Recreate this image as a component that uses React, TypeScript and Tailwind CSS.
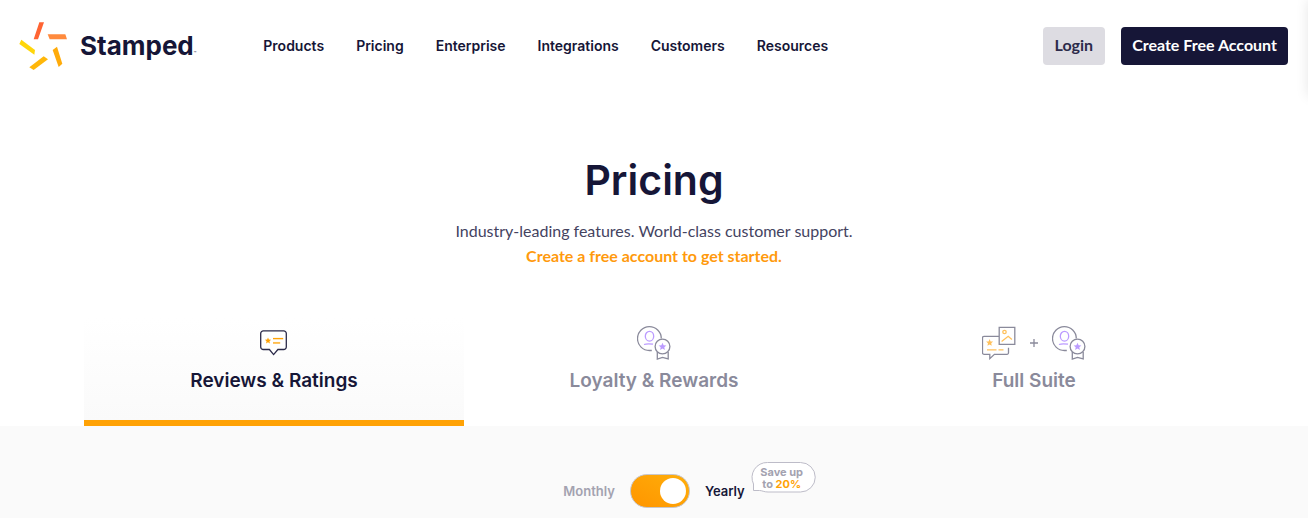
import { useState } from 'react';

const NAV_LINKS = ['Products', 'Pricing', 'Enterprise', 'Integrations', 'Customers', 'Resources'];

type TabId = 'reviews' | 'loyalty' | 'suite';

const STAR_POINTS = '0,-4 1.1,-1.4 3.9,-1.2 1.8,0.6 2.4,3.4 0,1.9 -2.4,3.4 -1.8,0.6 -3.9,-1.2 -1.1,-1.4';

function LogoMark() {
  return (
    <svg className="h-[50px] w-[50px]" viewBox="54 62 150 150" aria-hidden="true">
      <polygon points="118,66 132,66 114,117 101,117" fill="#ff6433" />
      <polygon points="143,102 196,102 201,117 149,117" fill="#ff8a3d" />
      <polygon points="64,118 105,149 103,163 58,131" fill="#ffd60a" />
      <polygon points="131,168 144,177 101,209 88,201" fill="#ffb70a" />
      <polygon points="158,149 171,139 187,190 176,200" fill="#ffab0a" />
    </svg>
  );
}

function ReviewsIcon() {
  return (
    <svg className="h-[34px] w-[34px]" viewBox="0 0 34 34" fill="none" aria-hidden="true">
      <path
        d="M6.3 4.9h20.4a2.6 2.6 0 0 1 2.6 2.6v13.4a2.6 2.6 0 0 1-2.6 2.6h-5.8l-4.3 5.1-4.2-5.1H6.3a2.6 2.6 0 0 1-2.6-2.6V7.5a2.6 2.6 0 0 1 2.6-2.6Z"
        fill="#fff"
        stroke="#2b2a49"
        strokeWidth="1.3"
      />
      <polygon points={STAR_POINTS} transform="translate(11 14.7) scale(.8)" fill="#ffa205" />
      <path d="M16 12.6h10.2" stroke="#ffa205" strokeWidth="1.4" />
      <path d="M16 16.9h7.2" stroke="#ffbd4d" strokeWidth="1.9" />
    </svg>
  );
}

function LoyaltyIcon() {
  return (
    <svg className="h-[34px] w-[34px]" viewBox="0 0 34 34" fill="none" strokeWidth="1.3" aria-hidden="true">
      <path d="M14.8 24.5H12.5A11.9 11.9 0 1 1 24.3 12.4" stroke="#8a8a9b" />
      <ellipse cx="12.5" cy="10.2" rx="4.2" ry="4.9" stroke="#bb9bff" />
      <path d="M7 18.5c2-.8 6-.8 9-.3" stroke="#bb9bff" />
      <circle cx="25.5" cy="20.5" r="7.4" stroke="#8a8a9b" />
      <polygon points={STAR_POINTS} transform="translate(25.5 20.7)" fill="#bb9bff" />
      <path d="M20.3 26v7l5.2-1.6 5.7 1.6v-7" stroke="#8a8a9b" />
    </svg>
  );
}

function ReviewPhotoIcon() {
  return (
    <svg className="h-[34px] w-[34px]" viewBox="0 0 34 34" fill="none" strokeWidth="1.3" aria-hidden="true">
      <path
        d="M17 10.3H2a1.5 1.5 0 0 0-1.500 1.5v15a1.5 1.5 0 0 0 1.5 1.5h5.8v4.3l4.6-4.3h12.6a1.5 1.5 0 0 0 1.5-1.5v-5"
        stroke="#8a8a9b"
      />
      <path d="M17.2 1.3h15.6v17H17.2z" stroke="#8a8a9b" />
      <circle cx="22.5" cy="6" r="1.7" stroke="#ffc15c" />
      <path d="m19.6 15.5 6.6-5.2 3.7 3.2" stroke="#ffc15c" />
      <polygon points={STAR_POINTS} transform="translate(7.6 16.7) scale(.9)" fill="#ffc15c" />
      <path d="M5 23.8h9.5M16.5 23.8h5" stroke="#ffc15c" />
    </svg>
  );
}

function SuiteIcon() {
  return (
    <span className="flex items-center gap-3">
      <ReviewPhotoIcon />
      <svg className="h-3 w-3" viewBox="0 0 12 12" stroke="#8a8a9b" strokeWidth="1.3" aria-hidden="true">
        <path d="M6 2v8M2 6h8" />
      </svg>
      <LoyaltyIcon />
    </span>
  );
}

const TABS: { id: TabId; label: string; Icon: () => React.JSX.Element }[] = [
  { id: 'reviews', label: 'Reviews & Ratings', Icon: ReviewsIcon },
  { id: 'loyalty', label: 'Loyalty & Rewards', Icon: LoyaltyIcon },
  { id: 'suite', label: 'Full Suite', Icon: SuiteIcon },
];

function Header() {
  return (
    <header className="flex h-[92px] items-center pr-5 pl-[18px]">
      <a href="#" className="flex items-center gap-3" aria-label="Stamped">
        <LogoMark />
        <span className="flex items-baseline text-[26px] leading-[34px] font-bold">
          Stamped<span className="text-[4px] leading-none">™</span>
        </span>
      </a>
      <nav className="ml-[67px] flex gap-8 text-sm font-semibold">
        {NAV_LINKS.map((label) => (
          <a key={label} href="#" className="whitespace-nowrap">
            {label}
          </a>
        ))}
      </nav>
      <div className="ml-auto flex gap-4 font-['Lato',sans-serif] text-base font-bold">
        <button type="button" className="h-[38px] rounded bg-[#dddce2] px-3 pb-0.5 text-[#2c2b4b]">
          Login
        </button>
        <button type="button" className="h-[38px] rounded bg-[#161637] px-[11px] pb-0.5 whitespace-nowrap text-white">
          Create Free Account
        </button>
      </div>
    </header>
  );
}

function SaveBubble() {
  return (
    <span className="absolute bottom-full left-full ml-1.5 -mb-3 flex h-[31px] w-[66px] flex-col items-center justify-center pr-1 text-[11px] leading-3 font-bold text-[#a3a2b0]">
      <svg className="absolute inset-0 h-full w-full" viewBox="0 0 66 31" fill="none" aria-hidden="true">
        <path
          d="M16.5.5h33a14.75 14.75 0 0 1 0 29.5H17c-4 0-6-1.5-8.5-1.5L2.5 28.5v-6.5A15 15 0 0 1 16.5.5Z"
          fill="#fff"
          stroke="#bdbcc8"
        />
      </svg>
      <span className="relative">Save up</span>
      <span className="relative">
        to <span className="text-[#ffa205]">20%</span>
      </span>
    </span>
  );
}

export default function App() {
  const [activeTab, setActiveTab] = useState<TabId>('reviews');
  const [yearly, setYearly] = useState(true);

  return (
    <div className="relative flex min-h-screen flex-col overflow-hidden bg-white font-['Inter',sans-serif] text-[#161637]">
      <Header />

      <div className="absolute top-0 left-full h-24 w-64 bg-white shadow-[0_0_12px_rgba(0,0,0,0.1)]" />

      <section className="pt-[60px] text-center">
        <h1 className="text-[41px] leading-[56px] font-semibold">Pricing</h1>
        <p className="mt-2.5 font-['Lato',sans-serif] text-base leading-[25px] text-[#44435f]">
          Industry-leading features. World-class customer support.
          <br />
          <a href="#" className="font-bold text-[#ff9a0d]">
            Create a free account to get started.
          </a>
        </p>
      </section>

      <div role="tablist" className="mx-auto mt-[50px] grid w-full max-w-[1140px] grid-cols-3">
        {TABS.map(({ id, label, Icon }) => {
          const active = id === activeTab;
          return (
            <button
              key={id}
              type="button"
              role="tab"
              aria-selected={active}
              onClick={() => setActiveTab(id)}
              className={`flex h-[108px] flex-col items-center border-b-[6px] pt-2 ${
                active
                  ? 'border-[#ffa205] bg-linear-to-b from-white to-[#fafafa]'
                  : 'border-transparent text-[#8a8a9b]'
              }`}
            >
              <Icon />
              <span className="mt-[9px] text-[19px] leading-6 font-semibold">{label}</span>
            </button>
          );
        })}
      </div>

      <section className="flex flex-1 items-start justify-center bg-[#fafafa] pt-12 pb-2">
        <div className="flex items-center gap-[15px] text-[13px] leading-5 font-semibold">
          <span className={yearly ? 'text-[#a3a2b0]' : ''}>Monthly</span>
          <input
            type="checkbox"
            role="switch"
            aria-label="Yearly billing"
            checked={yearly}
            onChange={(e) => setYearly(e.target.checked)}
            className="flex h-[34px] w-[60px] cursor-pointer appearance-none items-center rounded-full border border-[#c9c7c9] bg-[#d5d4dc] px-[3px] before:h-[26px] before:w-[26px] before:rounded-full before:bg-white checked:justify-end checked:bg-linear-to-tr checked:from-[#ff9500] checked:to-[#ffae0a]"
          />
          <span className={`relative ${yearly ? '' : 'text-[#a3a2b0]'}`}>
            Yearly
            <SaveBubble />
          </span>
        </div>
      </section>
    </div>
  );
}
